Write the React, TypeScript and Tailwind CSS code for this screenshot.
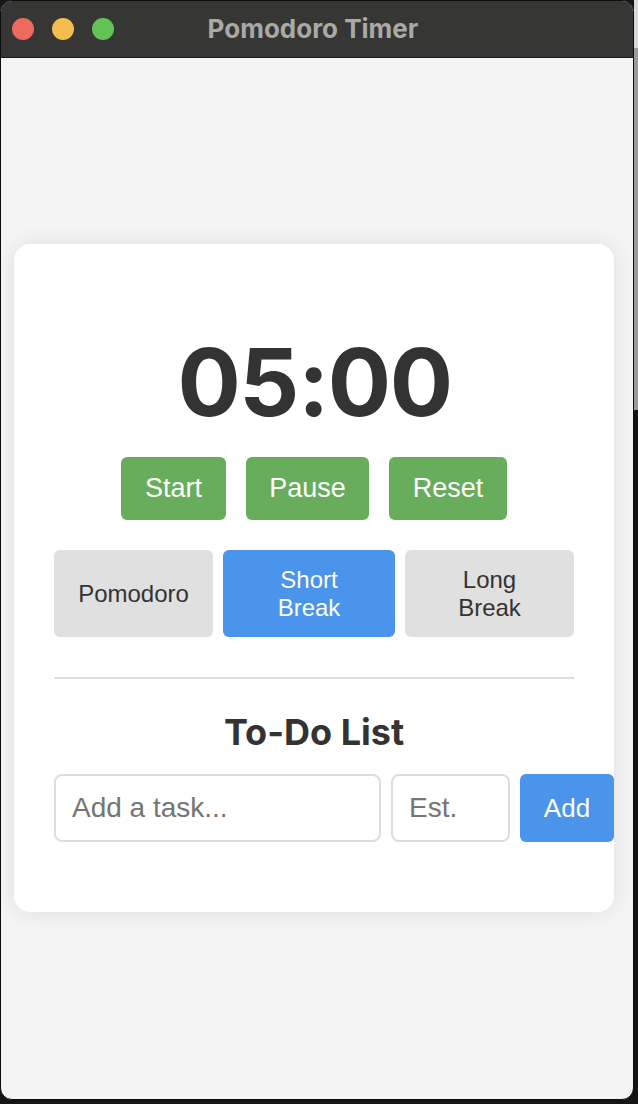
import React from "react";

export default function App() {
  const sans = { fontFamily: '"Liberation Sans", Arial, sans-serif' };
  return (
    <div className="w-[638px] h-[1104px] bg-[#151515] flex flex-col overflow-hidden">
      <div className="flex flex-row h-[1100px]">
        <div className="w-[634px] h-[1100px] rounded-[12px] overflow-hidden bg-[#f4f4f4] flex flex-col border border-[#0c0c0c]">
          <div className="h-[57px] shrink-0 bg-[#363634] border-b border-[#151515] relative flex items-center">
            <div className="flex items-center gap-[18px] pl-[11px]">
              <span className="w-[22px] h-[22px] rounded-full bg-[#ee6a5e]" />
              <span className="w-[22px] h-[22px] rounded-full bg-[#f5bd4f]" />
              <span className="w-[22px] h-[22px] rounded-full bg-[#61c454]" />
            </div>
            <div
              className="absolute left-0 right-0 top-0 h-[54px] flex items-center justify-center pr-[8px] text-[26px] font-bold text-[#a9a9a9]"
              style={{ fontFamily: 'Inter, "Liberation Sans", sans-serif' }}
            >
              Pomodoro Timer
            </div>
          </div>
          <div className="flex-1 flex items-center pl-[13px] pb-[1px]">
            <div className="w-[600px] bg-white rounded-[16px] shadow-[0_0_22px_rgba(0,0,0,0.09)] px-[40px] pt-[90px] pb-[70px] flex flex-col items-center">
              <div
                className="text-[94px] leading-[96px] tracking-[-1.5px] font-bold text-[#333333] h-[96px] pl-[1px]"
                style={{ fontFamily: 'Inter, "Liberation Sans", sans-serif' }}
              >
                05:00
              </div>
              <div className="flex gap-[20px] mt-[27px]" style={sans}>
                <button className="w-[105px] h-[63px] rounded-[6px] bg-[#68ad5c] text-white text-[27px]">Start</button>
                <button className="w-[123px] h-[63px] rounded-[6px] bg-[#68ad5c] text-white text-[27px]">Pause</button>
                <button className="w-[118px] h-[63px] rounded-[6px] bg-[#68ad5c] text-white text-[27px]">Reset</button>
              </div>
              <div className="flex gap-[10px] mt-[30px] w-[520px]" style={sans}>
                <button className="w-[159px] h-[87px] rounded-[6px] bg-[#e0e0e0] text-[#333333] text-[24px] leading-[28px]">Pomodoro</button>
                <button className="w-[172px] h-[87px] rounded-[6px] bg-[#4a94eb] text-white text-[24px] leading-[28px]">
                  Short
                  <br />
                  Break
                </button>
                <button className="w-[169px] h-[87px] rounded-[6px] bg-[#e0e0e0] text-[#333333] text-[24px] leading-[28px]">
                  Long
                  <br />
                  Break
                </button>
              </div>
              <div className="w-[520px] h-[2px] bg-[#dddddd] mt-[40px]" />
              <div
                className="mt-[35px] text-[36px] leading-[36px] font-bold text-[#333333]"
                style={{ fontFamily: 'Inter, "Liberation Sans", sans-serif' }}
              >
                To-Do List
              </div>
              <div className="flex gap-[10px] mt-[24px] w-[520px]" style={sans}>
                <input
                  className="w-[327px] h-[68px] shrink-0 border-2 border-[#dddddd] rounded-[8px] px-[16px] text-[28px] text-[#333] placeholder:text-[#757575] outline-none"
                  placeholder="Add a task..."
                />
                <input
                  className="w-[119px] h-[68px] shrink-0 border-2 border-[#dddddd] rounded-[8px] px-[16px] text-[28px] text-[#333] placeholder:text-[#757575] outline-none"
                  placeholder="Est."
                />
                <button className="w-[94px] h-[68px] shrink-0 rounded-[6px] bg-[#4a94eb] text-white text-[26px]">Add</button>
              </div>
            </div>
          </div>
        </div>
        <div className="w-[4px] flex flex-col">
          <div className="h-[48px] bg-[#d8d8d8]" />
          <div className="h-[362px] bg-[#9a9a9a]" />
          <div className="flex-1 bg-[#141414]" />
        </div>
      </div>
    </div>
  );
}
